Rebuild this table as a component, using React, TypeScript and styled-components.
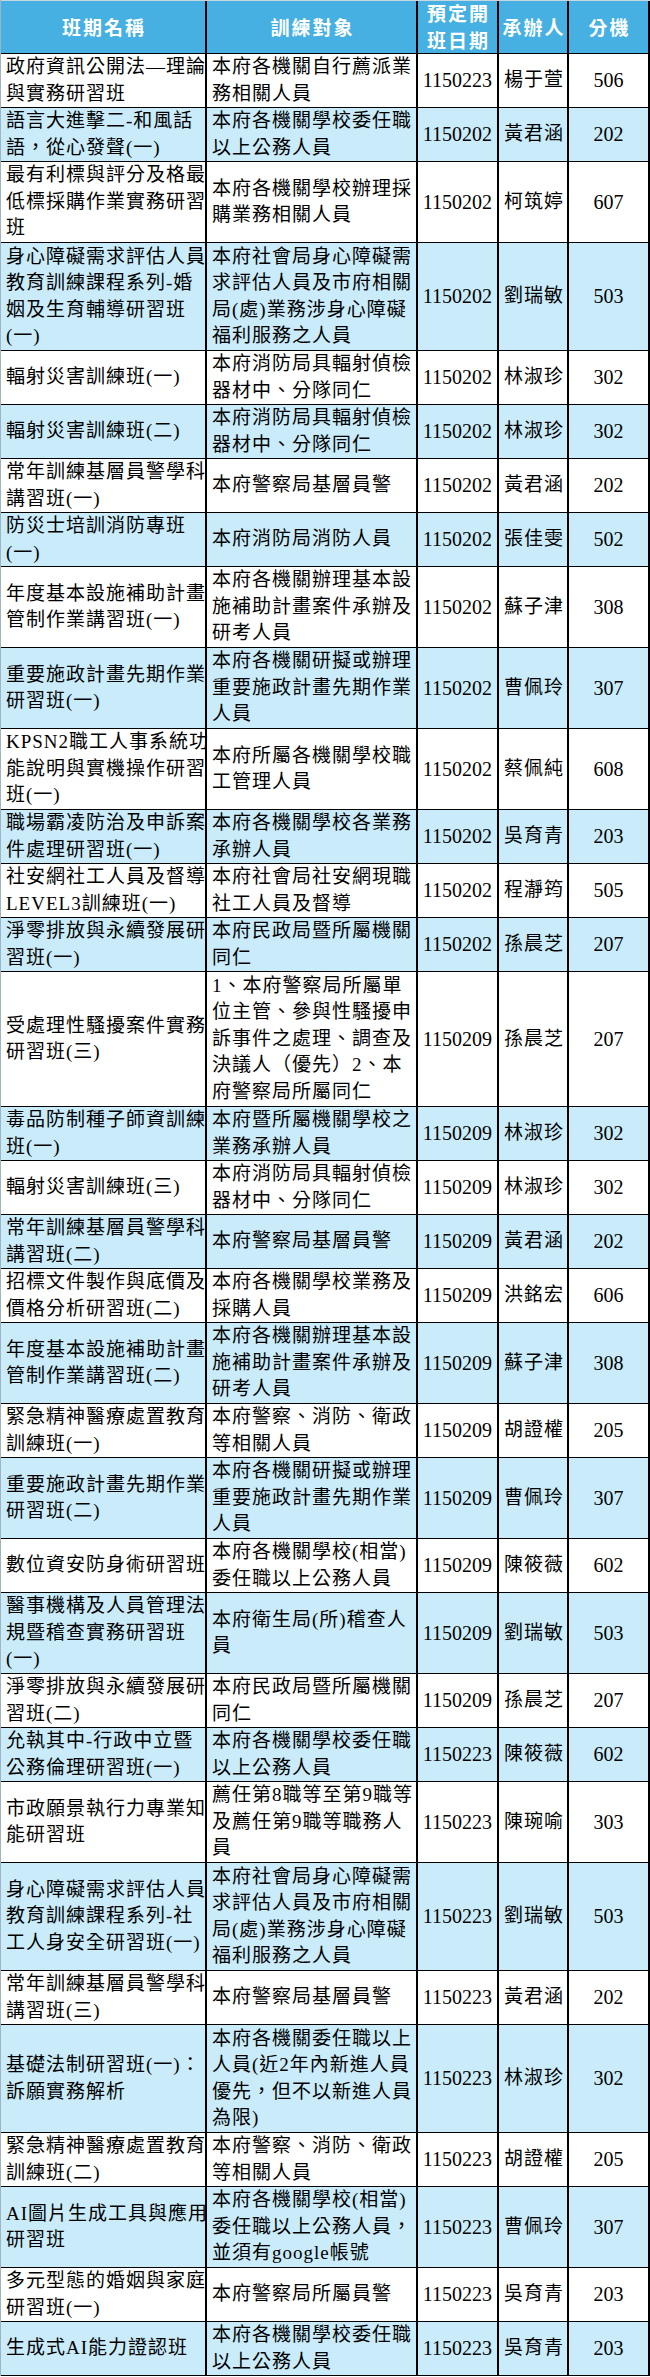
import styled, { createGlobalStyle } from "styled-components";

interface Course {
  name: string;
  target: string;
  date: string;
  person: string;
  ext: string;
}

interface RowProps {
  $lines: number;
  $shaded?: boolean;
}

const courses: Course[] = [
  { name: "政府資訊公開法—理論\n與實務研習班", target: "本府各機關自行薦派業\n務相關人員", date: "1150223", person: "楊于萱", ext: "506" },
  { name: "語言大進擊二-和風話\n語，從心發聲(一)", target: "本府各機關學校委任職\n以上公務人員", date: "1150202", person: "黃君涵", ext: "202" },
  { name: "最有利標與評分及格最\n低標採購作業實務研習\n班", target: "本府各機關學校辦理採\n購業務相關人員", date: "1150202", person: "柯筑婷", ext: "607" },
  { name: "身心障礙需求評估人員\n教育訓練課程系列-婚\n姻及生育輔導研習班\n(一)", target: "本府社會局身心障礙需\n求評估人員及市府相關\n局(處)業務涉身心障礙\n福利服務之人員", date: "1150202", person: "劉瑞敏", ext: "503" },
  { name: "輻射災害訓練班(一)", target: "本府消防局具輻射偵檢\n器材中、分隊同仁", date: "1150202", person: "林淑珍", ext: "302" },
  { name: "輻射災害訓練班(二)", target: "本府消防局具輻射偵檢\n器材中、分隊同仁", date: "1150202", person: "林淑珍", ext: "302" },
  { name: "常年訓練基層員警學科\n講習班(一)", target: "本府警察局基層員警", date: "1150202", person: "黃君涵", ext: "202" },
  { name: "防災士培訓消防專班\n(一)", target: "本府消防局消防人員", date: "1150202", person: "張佳雯", ext: "502" },
  { name: "年度基本設施補助計畫\n管制作業講習班(一)", target: "本府各機關辦理基本設\n施補助計畫案件承辦及\n研考人員", date: "1150202", person: "蘇子津", ext: "308" },
  { name: "重要施政計畫先期作業\n研習班(一)", target: "本府各機關研擬或辦理\n重要施政計畫先期作業\n人員", date: "1150202", person: "曹佩玲", ext: "307" },
  { name: "KPSN2職工人事系統功\n能說明與實機操作研習\n班(一)", target: "本府所屬各機關學校職\n工管理人員", date: "1150202", person: "蔡佩純", ext: "608" },
  { name: "職場霸凌防治及申訴案\n件處理研習班(一)", target: "本府各機關學校各業務\n承辦人員", date: "1150202", person: "吳育青", ext: "203" },
  { name: "社安網社工人員及督導\nLEVEL3訓練班(一)", target: "本府社會局社安網現職\n社工人員及督導", date: "1150202", person: "程瀞筠", ext: "505" },
  { name: "淨零排放與永續發展研\n習班(一)", target: "本府民政局暨所屬機關\n同仁", date: "1150202", person: "孫晨芝", ext: "207" },
  { name: "受處理性騷擾案件實務\n研習班(三)", target: "1、本府警察局所屬單\n位主管、參與性騷擾申\n訴事件之處理、調查及\n決議人（優先）2、本\n府警察局所屬同仁", date: "1150209", person: "孫晨芝", ext: "207" },
  { name: "毒品防制種子師資訓練\n班(一)", target: "本府暨所屬機關學校之\n業務承辦人員", date: "1150209", person: "林淑珍", ext: "302" },
  { name: "輻射災害訓練班(三)", target: "本府消防局具輻射偵檢\n器材中、分隊同仁", date: "1150209", person: "林淑珍", ext: "302" },
  { name: "常年訓練基層員警學科\n講習班(二)", target: "本府警察局基層員警", date: "1150209", person: "黃君涵", ext: "202" },
  { name: "招標文件製作與底價及\n價格分析研習班(二)", target: "本府各機關學校業務及\n採購人員", date: "1150209", person: "洪銘宏", ext: "606" },
  { name: "年度基本設施補助計畫\n管制作業講習班(二)", target: "本府各機關辦理基本設\n施補助計畫案件承辦及\n研考人員", date: "1150209", person: "蘇子津", ext: "308" },
  { name: "緊急精神醫療處置教育\n訓練班(一)", target: "本府警察、消防、衛政\n等相關人員", date: "1150209", person: "胡證權", ext: "205" },
  { name: "重要施政計畫先期作業\n研習班(二)", target: "本府各機關研擬或辦理\n重要施政計畫先期作業\n人員", date: "1150209", person: "曹佩玲", ext: "307" },
  { name: "數位資安防身術研習班", target: "本府各機關學校(相當)\n委任職以上公務人員", date: "1150209", person: "陳筱薇", ext: "602" },
  { name: "醫事機構及人員管理法\n規暨稽查實務研習班\n(一)", target: "本府衛生局(所)稽查人\n員", date: "1150209", person: "劉瑞敏", ext: "503" },
  { name: "淨零排放與永續發展研\n習班(二)", target: "本府民政局暨所屬機關\n同仁", date: "1150209", person: "孫晨芝", ext: "207" },
  { name: "允執其中-行政中立暨\n公務倫理研習班(一)", target: "本府各機關學校委任職\n以上公務人員", date: "1150223", person: "陳筱薇", ext: "602" },
  { name: "市政願景執行力專業知\n能研習班", target: "薦任第8職等至第9職等\n及薦任第9職等職務人\n員", date: "1150223", person: "陳琬喻", ext: "303" },
  { name: "身心障礙需求評估人員\n教育訓練課程系列-社\n工人身安全研習班(一)", target: "本府社會局身心障礙需\n求評估人員及市府相關\n局(處)業務涉身心障礙\n福利服務之人員", date: "1150223", person: "劉瑞敏", ext: "503" },
  { name: "常年訓練基層員警學科\n講習班(三)", target: "本府警察局基層員警", date: "1150223", person: "黃君涵", ext: "202" },
  { name: "基礎法制研習班(一)：\n訴願實務解析", target: "本府各機關委任職以上\n人員(近2年內新進人員\n優先，但不以新進人員\n為限)", date: "1150223", person: "林淑珍", ext: "302" },
  { name: "緊急精神醫療處置教育\n訓練班(二)", target: "本府警察、消防、衛政\n等相關人員", date: "1150223", person: "胡證權", ext: "205" },
  { name: "AI圖片生成工具與應用\n研習班", target: "本府各機關學校(相當)\n委任職以上公務人員，\n並須有google帳號", date: "1150223", person: "曹佩玲", ext: "307" },
  { name: "多元型態的婚姻與家庭\n研習班(一)", target: "本府警察局所屬員警", date: "1150223", person: "吳育青", ext: "203" },
  { name: "生成式AI能力證認班", target: "本府各機關學校委任職\n以上公務人員", date: "1150223", person: "吳育青", ext: "203" },
];

const GlobalStyle = createGlobalStyle`
  body {
    margin: 0;
    background: #fff;
  }
`;

const Sheet = styled.div`
  width: 650px;
  box-sizing: border-box;
  border-left: 1px solid #9fb4c2;
  font-family: "Liberation Serif", "Noto Sans CJK TC", serif;
  color: #000;
`;

const Row = styled.div<RowProps>`
  display: grid;
  grid-template-columns: 206px 211px 81px 70px 81px;
  height: ${(props) => props.$lines * 27}px;
  box-sizing: border-box;
  border-bottom: 1px solid #000;
  background-color: ${(props) => (props.$shaded ? "#c9ebfa" : "#ffffff")};
`;

const HeadRow = styled(Row)`
  background-color: #45b0e1;
  border-top: 1px solid #c9d8e0;
`;

const Cell = styled.div`
  display: flex;
  align-items: center;
  justify-content: flex-start;
  text-align: left;
  box-sizing: border-box;
  padding-left: 5px;
  border-right: 2px solid #000;
  white-space: pre;
  font-size: 19px;
  letter-spacing: 1px;
  line-height: 26.5px;
`;

const PersonCell = styled(Cell)`
  justify-content: center;
  text-align: center;
  padding-left: 2px;
`;

const HeadCell = styled(Cell)`
  justify-content: center;
  text-align: center;
  padding-left: 2px;
  color: #fff;
  font-weight: 700;
  letter-spacing: 2px;
  line-height: 27px;
`;

const NumberCell = styled(Cell)`
  justify-content: center;
  padding-left: 0;
  font-size: 20px;
  letter-spacing: 0;
`;

const countLines = (text: string) => text.split("\n").length;

export default function App() {
  return (
    <>
      <GlobalStyle />
      <Sheet>
        <HeadRow $lines={2}>
          <HeadCell>班期名稱</HeadCell>
          <HeadCell>訓練對象</HeadCell>
          <HeadCell>{"預定開\n班日期"}</HeadCell>
          <HeadCell>承辦人</HeadCell>
          <HeadCell>分機</HeadCell>
        </HeadRow>
        {courses.map((course, i) => (
          <Row
            key={i}
            $lines={Math.max(countLines(course.name), countLines(course.target))}
            $shaded={i % 2 === 1}
          >
            <Cell>{course.name}</Cell>
            <Cell>{course.target}</Cell>
            <NumberCell>{course.date}</NumberCell>
            <PersonCell>{course.person}</PersonCell>
            <NumberCell>{course.ext}</NumberCell>
          </Row>
        ))}
      </Sheet>
    </>
  );
}
